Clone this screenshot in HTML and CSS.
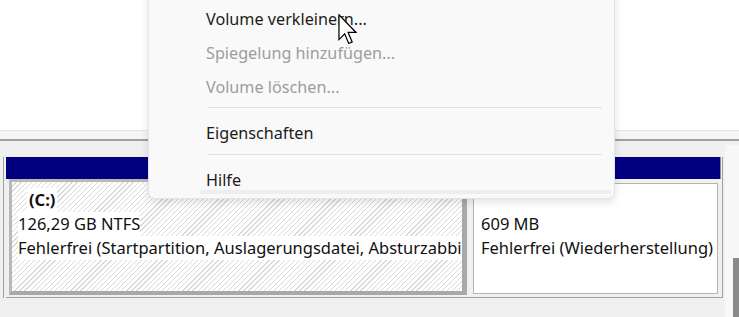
FILE: index.html
```html
<!DOCTYPE html>
<html lang="de">
<head>
    <meta charset="UTF-8">
    <title>Datenträgerverwaltung</title>
    <link rel="stylesheet" href="styles.css">
</head>
<body>

<div class="window">
    <div class="top-pane"></div>
    <div class="splitter"></div>

    <div class="bottom-pane">
        <div class="disk-area">
            <div class="disk">
                <div class="volume volume-c">
                    <div class="volume-header"></div>
                    <div class="volume-body">
                        <div class="volume-frame selected">
                            <div class="volume-inner hatched">
                                <span class="vol-line vol-label">(C:)</span>
                                <span class="vol-line">126,29 GB NTFS</span>
                                <span class="vol-line">Fehlerfrei (Startpartition, Auslagerungsdatei, Absturzabbild)</span>
                            </div>
                        </div>
                    </div>
                </div>
                <div class="volume volume-recovery">
                    <div class="volume-header"></div>
                    <div class="volume-body">
                        <div class="volume-frame">
                            <div class="volume-inner">
                                <span class="vol-line empty">&nbsp;</span>
                                <span class="vol-line">609 MB</span>
                                <span class="vol-line">Fehlerfrei (Wiederherstellung)</span>
                            </div>
                        </div>
                    </div>
                </div>
            </div>
        </div>
        <div class="scroll-track">
            <div class="scroll-thumb"></div>
        </div>
    </div>

    <div class="context-menu">
        <div class="menu-item">Volume verkleinern...</div>
        <div class="menu-item disabled">Spiegelung hinzufügen...</div>
        <div class="menu-item disabled">Volume löschen...</div>
        <div class="menu-separator"></div>
        <div class="menu-item">Eigenschaften</div>
        <div class="menu-separator sep-low"></div>
        <div class="menu-item">Hilfe</div>
        <div class="menu-band"></div>
    </div>

    <svg class="cursor" viewBox="0 0 12 20" width="19" height="31">
        <path d="M0.5 0.5 L0.5 16.5 L4.2 12.8 L6.8 19 L9 18 L6.4 11.9 L11.5 11.9 Z" fill="#fff" stroke="#000" stroke-width="0.8" stroke-linejoin="miter"/>
    </svg>
</div>

</body>
</html>
```

FILE: styles.css
```css
* {
    box-sizing: border-box;
}

body, html {
    margin: 0;
    background: #f0f0f0;
    font-family: "Noto Sans", "Open Sans", sans-serif;
}

.window {
    position: relative;
    width: 739px;
    height: 317px;
    overflow: hidden;
}

.top-pane {
    height: 131px;
    background: white;
    border-bottom: 1px solid #e3e3e3;
}

.splitter {
    height: 10px;
    background: #f5f5f5;
    border-bottom: 2px solid #a0a0a0;
}

.bottom-pane {
    display: flex;
    height: 176px;
    background: #f0f0f0;
}

.disk-area {
    flex: 1;
    padding-top: 16px;
}

.disk {
    display: flex;
    margin-left: 3px;
    padding-left: 2px;
    border-left: 1px solid #a0a0a0;
}

.volume {
    display: flex;
    flex-direction: column;
    border-bottom: 1px solid #a0a0a0;
}

.volume-header {
    height: 22px;
    background: #000080;
}

.volume-c {
    width: 462px;
}

.volume-c .volume-body {
    padding: 0 1px 2px 3px;
}

.volume-recovery {
    width: 255px;
    border-right: 1px solid #a0a0a0;
}

.volume-recovery .volume-header {
    margin-right: 1px;
    border-right: 1px solid #8c8c8c;
}

.volume-recovery .volume-body {
    padding: 4px 4px 3px 5px;
}

.volume-frame {
    background: white;
    border: 1px solid #b4b4b4;
}

.volume-frame.selected {
    border-style: solid;
    border-color: #b8b8b8 #a8a8a8 #a8a8a8 #b8b8b8;
    border-width: 3px 5px 4px 3px;
}

.volume-inner {
    display: flex;
    flex-direction: column;
    align-items: flex-start;
    overflow: hidden;
    height: 109px;
    padding: 4px 0 0 7px;
    font-size: 16.5px;
    line-height: 24px;
    color: #101010;
    white-space: nowrap;
}

.hatched {
    height: 109px;
    padding: 6px 0 0 6px;
    background: repeating-linear-gradient(135deg, #ffffff 0px, #ffffff 2.7px, #d8d8d8 2.7px, #d8d8d8 3.6px);
}

.vol-line {
    background: white;
}

.vol-label {
    font-weight: bold;
    margin-left: 9px;
    padding: 0 2px;
}

.vol-line.empty {
    background: transparent;
}

.scroll-track {
    width: 14px;
    margin-top: 4px;
    background: #f7f7f7;
    padding-top: 113px;
}

.scroll-thumb {
    margin-left: 8px;
    width: 6px;
    height: 80px;
    background: #8a8a8a;
}

/* context menu over everything */

.context-menu {
    position: absolute;
    left: 148px;
    top: -10px;
    width: 467px;
    padding: 11px 0 4px 0;
    background: #f9f9f9;
    border: 1px solid #e4e4e4;
    border-radius: 0 0 7px 7px;
    box-shadow: 0 3px 8px rgba(0, 0, 0, 0.12);
}

.menu-item {
    height: 34px;
    line-height: 34px;
    padding-left: 57px;
    font-size: 16.2px;
    color: #1b1b1b;
}

.menu-item.disabled {
    color: #9d9d9d;
}

.menu-separator {
    height: 1px;
    margin: 3px 12px 8px 59px;
    background: #e2e2e2;
}

.menu-separator.sep-low {
    margin-top: 4px;
}

.menu-band {
    height: 4px;
    margin: -7px 3px 0 51px;
    background: #eeeeee;
}

.cursor {
    position: absolute;
    left: 338px;
    top: 14px;
}
```
